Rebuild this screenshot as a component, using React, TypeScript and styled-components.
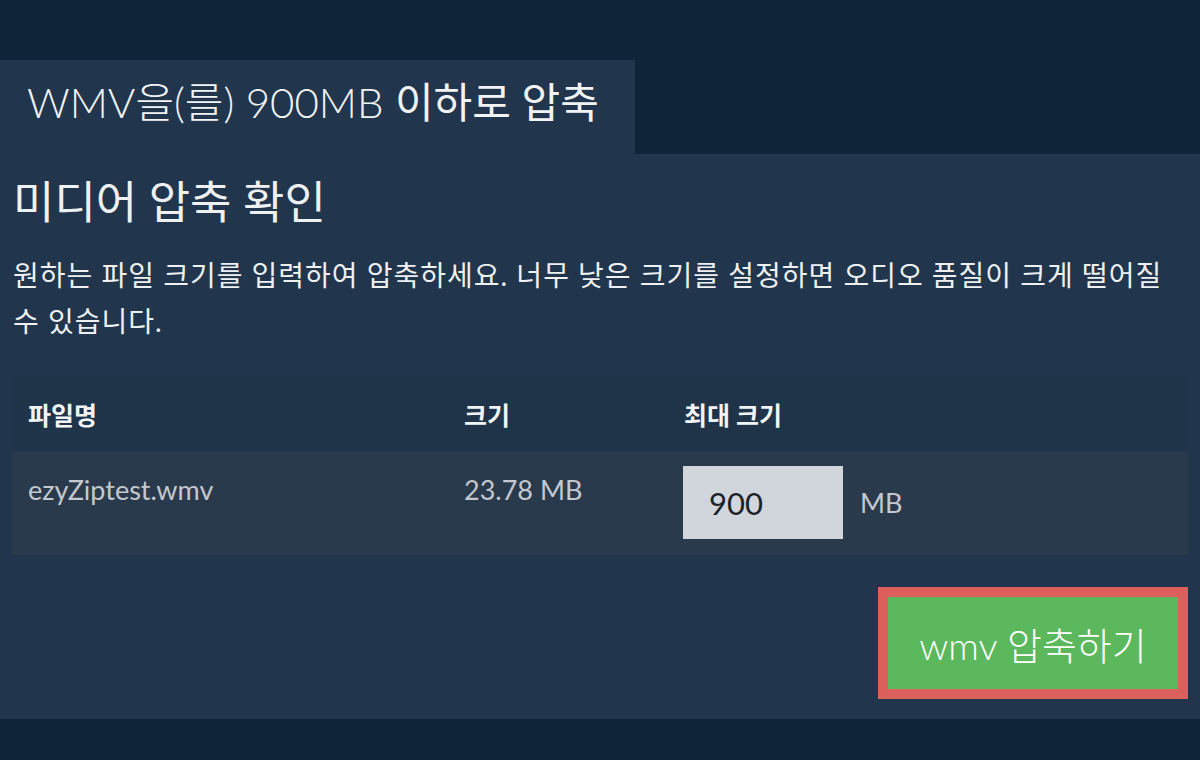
import React from "react";
import styled, { createGlobalStyle } from "styled-components";

const GlobalStyle = createGlobalStyle`
  html, body {
    margin: 0;
    padding: 0;
    background: #0f2339;
  }
  body {
    font-family: Lato, "Noto Sans CJK KR", sans-serif;
  }
`;

const Page = styled.div`
  padding-top: 60px;
  min-height: 760px;
  box-sizing: border-box;
  background: #0f2339;
`;

const Tab = styled.div`
  width: 635px;
  height: 94px;
  box-sizing: border-box;
  padding: 14px 0 0 27px;
  background: #21364d;
  color: #f1f3f5;
  font-size: 42px;
  font-weight: 300;
  line-height: 56px;
  white-space: nowrap;
`;

const TabStrong = styled.span`
  font-weight: 400;
`;

const Panel = styled.div`
  background: #21364d;
  padding: 20px 12px 20px 12px;
  display: flex;
  flex-direction: column;
`;

const Title = styled.h1`
  margin: 0 0 0 1px;
  font-size: 45px;
  font-weight: 400;
  line-height: 56px;
  color: #eef0f2;
`;

const Description = styled.p`
  margin: 22px 0 33px 1px;
  font-size: 28px;
  line-height: 46px;
  letter-spacing: 1px;
  word-break: keep-all;
  color: #eef0f2;
`;

const Table = styled.div`
  display: grid;
  grid-template-columns: 436px 220px 1fr;
`;

const HeaderCell = styled.div`
  background: #1f3349;
  height: 74px;
  display: flex;
  align-items: center;
  padding: 0 16px;
  font-size: 25px;
  font-weight: 700;
  color: #f1f3f5;
`;

const BodyCell = styled.div`
  background: #2a3a4d;
  height: 104px;
  box-sizing: border-box;
  padding: 22px 16px 0 16px;
  font-size: 27px;
  line-height: 33px;
  color: #c3c8ce;
`;

const SizeCell = styled(BodyCell)`
  padding: 15px 16px 0 15px;
`;

const InputRow = styled.div`
  display: flex;
  align-items: center;
`;

const SizeInput = styled.input`
  width: 160px;
  height: 73px;
  box-sizing: border-box;
  border: none;
  outline: none;
  background: #d1d6dc;
  padding: 0 0 0 26px;
  font-family: Lato, sans-serif;
  font-size: 31px;
  color: #1c222a;
`;

const Unit = styled.span`
  margin-left: 17px;
  font-size: 27px;
  color: #c3c8ce;
`;

const Actions = styled.div`
  display: flex;
  justify-content: flex-end;
  margin-top: 32px;
`;

const CompressButton = styled.button`
  width: 310px;
  height: 112px;
  box-sizing: border-box;
  border: 10px solid #dc5f5b;
  background: #5cb85c;
  color: #ffffff;
  font-family: Lato, "Noto Sans CJK KR", sans-serif;
  font-size: 38px;
  font-weight: 300;
  padding: 0;
  cursor: pointer;
  &:hover {
    opacity: 0.9;
  }
`;

const App: React.FC = () => {
  return (
    <>
      <GlobalStyle />
      <Page>
        <Tab>
          WMV을(를) 900MB <TabStrong>이하로 압축</TabStrong>
        </Tab>
        <Panel>
          <Title>미디어 압축 확인</Title>
          <Description>
            원하는 파일 크기를 입력하여 압축하세요. 너무 낮은 크기를 설정하면
            오디오 품질이 크게 떨어질 수 있습니다.
          </Description>
          <Table>
            <HeaderCell>파일명</HeaderCell>
            <HeaderCell>크기</HeaderCell>
            <HeaderCell>최대 크기</HeaderCell>
            <BodyCell>ezyZiptest.wmv</BodyCell>
            <BodyCell>23.78 MB</BodyCell>
            <SizeCell>
              <InputRow>
                <SizeInput type="text" defaultValue="900" />
                <Unit>MB</Unit>
              </InputRow>
            </SizeCell>
          </Table>
          <Actions>
            <CompressButton>wmv 압축하기</CompressButton>
          </Actions>
        </Panel>
      </Page>
    </>
  );
};

export default App;
